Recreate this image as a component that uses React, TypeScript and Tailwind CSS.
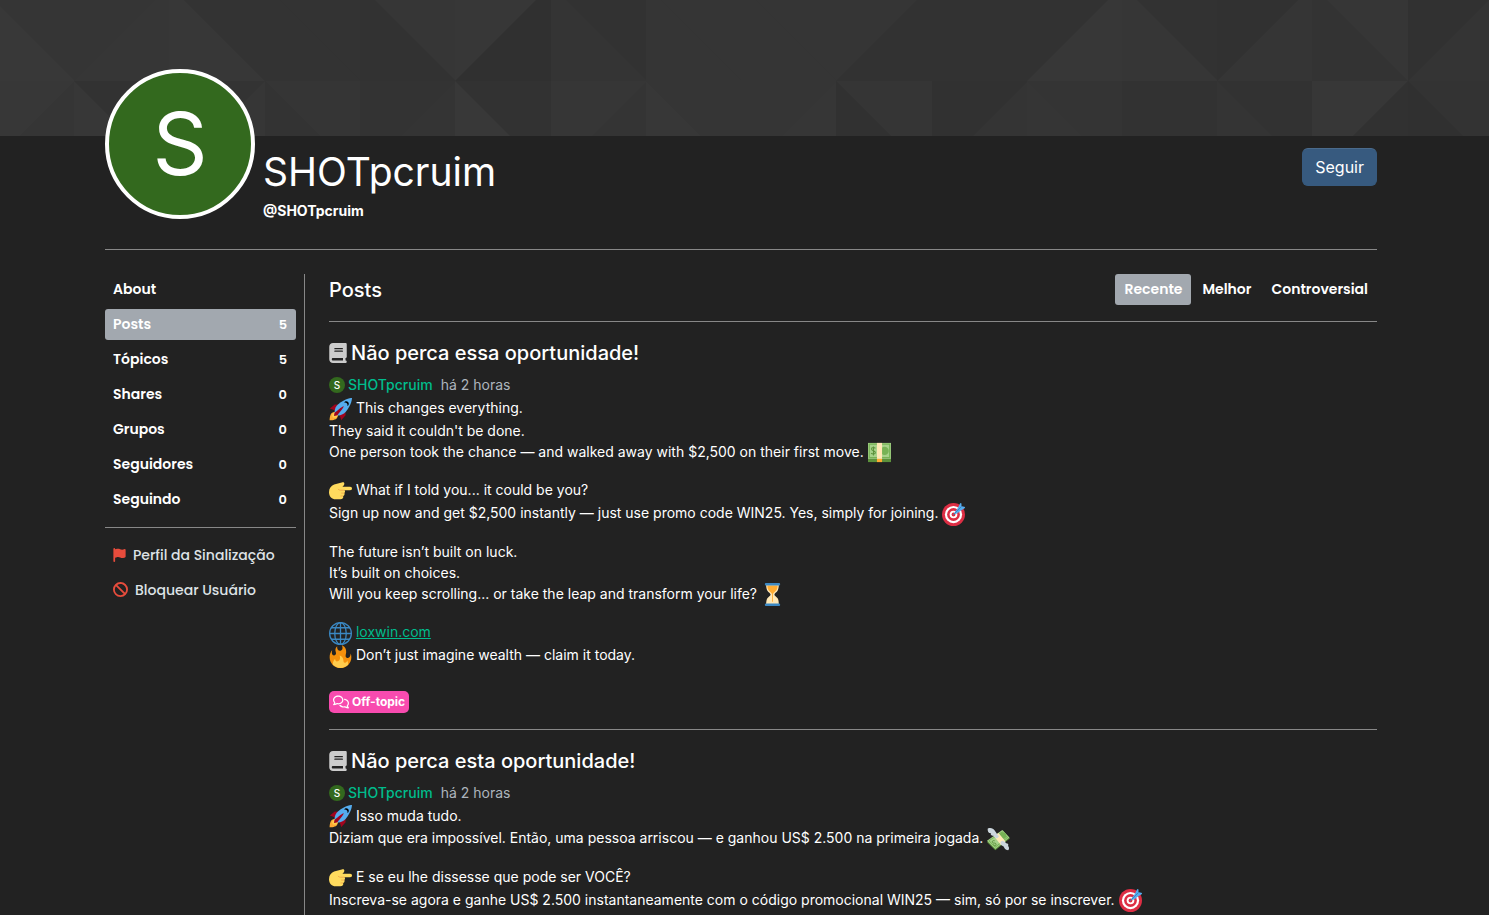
import { useState } from 'react';
import type { ReactNode } from 'react';
import { FaBan, FaBook, FaFlag, FaRegComments } from 'react-icons/fa6';

type Slope = '/' | '\\';

// [x, slope, left colour, right colour]
const topRow: [number, Slope, string, string][] = [
  [-21, '\\', '#383838', '#353535'],
  [74, '/', '#353535', '#363636'],
  [169, '\\', '#373737', '#333333'],
  [265, '\\', '#333333', '#333333'],
  [360, '\\', '#323232', '#363636'],
  [455, '/', '#373737', '#303030'],
  [551, '\\', '#343434', '#323232'],
  [646, '\\', '#353535', '#353535'],
  [741, '\\', '#353535', '#353535'],
  [836, '/', '#353535', '#323232'],
  [932, '/', '#323232', '#323232'],
  [1027, '/', '#323232', '#373737'],
  [1122, '\\', '#363636', '#323232'],
  [1217, '/', '#313131', '#353535'],
  [1312, '\\', '#333333', '#363636'],
  [1408, '/', '#313131', '#343434'],
];

const bottomRow: [number, Slope, string, string][] = [
  [-21, '/', '#373737', '#353535'],
  [74, '\\', '#373737', '#323232'],
  [169, '/', '#333333', '#363636'],
  [265, '\\', '#333333', '#353535'],
  [360, '/', '#333333', '#343434'],
  [455, '\\', '#383838', '#323232'],
  [551, '/', '#363636', '#343434'],
  [646, '\\', '#373737', '#353535'],
  [741, '/', '#353535', '#363636'],
  [836, '\\', '#313131', '#353535'],
  [932, '/', '#313131', '#343434'],
  [1027, '\\', '#353535', '#343434'],
  [1122, '/', '#323232', '#323232'],
  [1217, '\\', '#343434', '#323232'],
  [1312, '/', '#373737', '#313131'],
  [1408, '\\', '#303030', '#333333'],
];

function Tile({ x, y, slope, left, right }: { x: number; y: number; slope: Slope; left: string; right: string }) {
  const s = 96;
  const half = slope === '/' ? `M${x} ${y}v${s}l${s} ${-s}z` : `M${x} ${y}v${s}h${s}z`;
  return (
    <>
      <rect x={x} y={y} width={s} height={s} fill={right} />
      <path d={half} fill={left} />
    </>
  );
}

function Cover() {
  return (
    <div className="h-[136px] overflow-hidden bg-[#343434]">
      <svg className="block h-full w-full" viewBox="0 0 1489 136" preserveAspectRatio="xMinYMin slice" aria-hidden="true">
        {topRow.map(([x, slope, left, right]) => (
          <Tile key={x} x={x} y={-15} slope={slope} left={left} right={right} />
        ))}
        {bottomRow.map(([x, slope, left, right]) => (
          <Tile key={x} x={x} y={81} slope={slope} left={left} right={right} />
        ))}
      </svg>
    </div>
  );
}

function Emoji({ label, children }: { label: string; children: ReactNode }) {
  return (
    <svg className="-my-px inline-block size-[23px] align-middle" viewBox="0 0 36 36" role="img" aria-label={label}>
      {children}
    </svg>
  );
}

const Rocket = () => (
  <Emoji label="rocket">
    <path fill="#A0041E" d="M1 17l8-7 16 1 1 16-7 8s.001-5.999-6-12-12-6-12-6z" />
    <path fill="#FFAC33" d="M.973 35s-.036-7.979 2.985-11S15 21.187 15 21.187 14.999 29 11.999 32c-3 3-11.026 3-11.026 3z" />
    <circle fill="#FFCC4D" cx="9" cy="27" r="4" />
    <path fill="#55ACEE" d="M35.999 0s-10 0-22 10c-6 5-6 14-4 16s11 2 16-4c10-12 10-22 10-22z" />
    <path d="M26.999 5c-1.623 0-3.013.971-3.641 2.36.502-.227 1.055-.36 1.641-.36 2.209 0 4 1.791 4 4 0 .586-.133 1.139-.359 1.64 1.389-.627 2.359-2.017 2.359-3.64 0-2.209-1.791-4-4-4z" />
    <path fill="#A0041E" d="M8 28s0-4 1-5 13.001-10.999 14-10-9.001 13-10.001 14S8 28 8 28z" />
  </Emoji>
);

const Banknote = () => (
  <Emoji label="dollar banknote">
    <path fill="#5C913B" d="M0 28h36v5H0z" />
    <path fill="#A7D28B" d="M0 3h36v25H0z" />
    <path fill="#77B255" d="M1 4v23h34V4H1zm32 21H3V6h30v19z" />
    <circle cx="26" cy="15.500" r="6.500" fill="#77B255" />
    <path d="M11.500 11.500C10 9.800 5.500 9.700 5.500 12.500c0 3.200 6 2.300 6 5.500 0 3-5 3-6.500 1M8.500 8.500v14" fill="none" stroke="#5C913B" strokeWidth="1.600" />
    <path fill="#FFE8B6" d="M14 3h8v25h-8z" />
    <path fill="#FFAC33" d="M14 28h8v5h-8z" />
  </Emoji>
);

const MoneyWings = () => (
  <Emoji label="money with wings">
    <path fill="#5C913B" d="M0 22L25 4l11 12-23 19z" />
    <path fill="#A7D28B" d="M0 20L24 3l11 12-22 18z" />
    <path fill="#77B255" d="M2 20L24 5l9 10-20 16zM4 20l9 9 18-14-7-8z" />
    <circle cx="25" cy="12" r="5" fill="#77B255" />
    <path d="M12 20c-3-1-5 1-3 3s4-1 5 2-2 3-4 1" fill="none" stroke="#5C913B" strokeWidth="1.500" />
    <path fill="#FFE8B6" d="M11 13l7-5 11 13-7 6z" />
    <path fill="#CCD6DD" d="M1 1c5-2 9 0 11 3 3 4 4 7 7 9l-3 3c-3 0-5-3-6-4-3 1-5-2-4-4C2 8 1 5 1 1z" />
    <path fill="#CCD6DD" d="M21 22l3-2c3 1 5 2 6 4 3 0 4 2 3 4 2 2 2 5 0 7-5-1-6-4-7-6-3-1-5-3-5-7z" />
  </Emoji>
);

const PointRight = () => (
  <Emoji label="pointing right">
    <path
      fill="#FFDB5E"
      d="M33 10.500H21c2-1.500 3-3 3-5C24 3.500 22 3.300 20 4L8 7c-5 2-8 6-8 12 0 7 5 11 10 11h8c4 0 5-3 4-5 2-1 3-3 2-4.500 1.500-1.300 1.300-3.300.300-4.500H33c4 0 4-5.500 0-5.500z"
    />
    <path d="M24.300 16H18c-2 0-3-.700-4-2M24 20.500h-5M22 25h-4" fill="none" stroke="#EE9547" strokeWidth="1" />
  </Emoji>
);

const Target = () => (
  <Emoji label="bullseye">
    <circle cx="18" cy="18" r="18" fill="#DD2E44" />
    <circle cx="18" cy="18" r="13.500" fill="#FFF" />
    <circle cx="18" cy="18" r="10" fill="#DD2E44" />
    <circle cx="18" cy="18" r="6" fill="#FFF" />
    <circle cx="18" cy="18" r="3" fill="#DD2E44" />
    <path fill="#55ACEE" d="M19 17c0-2 3-6 5-8l4-8c1-1.500 2.500-1 2.500.500V5l4.500 1c1.500.300 1.500 1.500.300 2.300L28 13c-2 2-6 5-9 4z" />
    <path d="M17.500 18.500L31 5" stroke="#3A87C2" strokeWidth="1.500" />
  </Emoji>
);

const Hourglass = () => (
  <Emoji label="hourglass">
    <path
      fill="#FFE8B6"
      d="M21 18c0-2.001 3.246-3.369 5-6 2-3 2-10 2-10H8s0 7 2 10c1.754 2.631 5 3.999 5 6s-3.246 3.369-5 6c-2 3-2 10-2 10h20s0-7-2-10c-1.754-2.631-5-3.999-5-6z"
    />
    <path fill="#FFAC33" d="M10 4h16c0 3-.500 5.500-2 7.500-1.800 2.500-4.300 3.800-5.300 6v12h-1.400v-12c-1-2.200-3.500-3.500-5.300-6-1.500-2-2-4.500-2-7.500z" />
    <path
      fill="#3B88C3"
      d="M30 34c0 1.104-.896 2-2 2H8c-1.104 0-2-.896-2-2s.896-2 2-2h20c1.104 0 2 .896 2 2zm0-32c0 1.104-.896 2-2 2H8c-1.104 0-2-.896-2-2s.896-2 2-2h20c1.104 0 2 .896 2 2z"
    />
  </Emoji>
);

const Globe = () => (
  <Emoji label="globe">
    <g fill="none" stroke="#3B88C3" strokeWidth="2">
      <circle cx="18" cy="18" r="17" />
      <ellipse cx="18" cy="18" rx="9" ry="17" />
      <path d="M18 1v34M1 18h34M4 9h28M4 27h28" />
    </g>
  </Emoji>
);

const Fire = () => (
  <Emoji label="fire">
    <path
      fill="#F4900C"
      d="M35 19c0-2.062-.367-4.039-1.04-5.868-.46 5.389-3.333 8.157-6.335 6.868-2.812-1.208-.917-5.917-.777-8.164.236-3.809-.012-8.169-6.931-11.794 2.875 5.500.333 8.917-2.333 9.125-2.958.231-5.667-2.542-4.667-7.042-3.238 2.386-3.332 6.402-2.333 9 1.042 2.708-.042 4.958-2.583 5.208-2.840.280-4.418-3.041-2.963-8.333C2.520 10.965 1 14.805 1 19c0 9.389 7.611 17 17 17s17-7.611 17-17z"
    />
    <path
      fill="#FFCC4D"
      d="M28.394 23.999c.148 3.084-2.561 4.293-4.019 3.709-2.106-.843-1.541-2.291-2.083-5.291s-2.625-5.083-5.708-6c2.250 6.333-1.247 8.667-3.080 9.084-1.872.426-3.753-.001-3.968-4.007C7.352 23.668 6 26.676 6 30c0 .368.023.730.055 1.090C9.125 34.124 13.342 36 18 36s8.875-1.876 11.945-4.910c.032-.360.055-.722.055-1.090 0-2.187-.584-4.236-1.606-6.001z"
    />
  </Emoji>
);

const navItems: { label: string; count?: number }[] = [
  { label: 'About' },
  { label: 'Posts', count: 5 },
  { label: 'Tópicos', count: 5 },
  { label: 'Shares', count: 0 },
  { label: 'Grupos', count: 0 },
  { label: 'Seguidores', count: 0 },
  { label: 'Seguindo', count: 0 },
];

function Sidebar() {
  return (
    <aside className="w-[200px] shrink-0 border-r border-[#888] pr-2 font-['Poppins','Inter',sans-serif] text-sm">
      <nav className="flex flex-col gap-1 font-semibold">
        {navItems.map((item) => (
          <a
            key={item.label}
            href="#"
            className={`flex h-[31px] items-baseline justify-between rounded-[3px] px-2 pt-[5px] ${
              item.label === 'Posts' ? 'bg-[#a2a8af]' : 'hover:bg-[#303030]'
            }`}
          >
            {item.label}
            {item.count !== undefined && <span className="pr-px text-[13px]">{item.count}</span>}
          </a>
        ))}
      </nav>
      <hr className="my-3 border-[#888]" />
      <div className="flex flex-col gap-1 font-medium text-[#dee2e6]">
        <button type="button" className="flex h-[31px] items-center gap-[7px] px-2 pb-0.5">
          <FaFlag className="h-[14px] w-[13px] text-[#e74c3c]" />
          Perfil da Sinalização
        </button>
        <button type="button" className="flex h-[31px] items-center gap-[7px] px-2 pb-0.5">
          <FaBan className="size-[15px] text-[#e74c3c]" />
          Bloquear Usuário
        </button>
      </div>
    </aside>
  );
}

function Post({ title, children }: { title: string; children: ReactNode }) {
  return (
    <article className="border-b border-[#888] pt-4 pb-4">
      <h2 className="flex items-center gap-1 text-xl leading-[30px] font-medium">
        <FaBook className="h-5 w-[18px] text-[#ccc]" />
        <a href="#">{title}</a>
      </h2>
      <div className="mt-2 flex h-[18px] items-center text-sm">
        <span className="flex size-4 items-center justify-center rounded-full bg-[#33691e] text-[10px] font-medium">S</span>
        <a href="#" className="ml-[3px] font-medium text-[#00bc8c]">
          SHOTpcruim
        </a>
        <span className="ml-2 text-[#adb5bd]">há 2 horas</span>
      </div>
      <div className="mt-[3px] flex flex-col gap-4 text-sm leading-[21px]">{children}</div>
      <a
        href="#"
        className="mt-6 flex h-[22px] w-fit items-center gap-[3px] rounded-[5px] bg-[#f84baf] px-1 text-xs font-bold"
      >
        <FaRegComments className="size-4" />
        Off-topic
      </a>
    </article>
  );
}

export default function App() {
  const [sort, setSort] = useState('Recente');

  return (
    <div className="h-screen overflow-hidden bg-[#222] font-['Inter',sans-serif] text-white">
      <Cover />
      <div className="pr-[7px]">
        <div className="mx-auto max-w-[1320px] px-6">
          {/* Profile header */}
          <header className="flex h-[114px] items-start border-b border-[#888]">
            <div className="relative -mt-[67px] flex size-[150px] shrink-0 items-center justify-center rounded-full border-4 border-white bg-[#33691e] text-[86px] leading-none">
              S
            </div>
            <div className="ml-2 pt-3">
              <h1 className="text-[39px] leading-[48px]">SHOTpcruim</h1>
              <p className="mt-1 text-sm leading-[21px] font-bold">@SHOTpcruim</p>
            </div>
            <button
              type="button"
              className="mt-3 ml-auto h-[38px] rounded-md border border-[#375a7f] border-t-[#4b6b8c] bg-[#375a7f] px-3 text-base hover:bg-[#2f4d6c]"
            >
              Seguir
            </button>
          </header>

          <div className="mt-6 flex">
            <Sidebar />
            <main className="min-w-0 flex-1 pl-6">
              <div className="flex items-center justify-between border-b border-[#888] pb-4">
                <h2 className="text-xl font-medium">Posts</h2>
                <div className="flex gap-0.5 font-['Poppins','Inter',sans-serif] text-sm font-semibold">
                  {['Recente', 'Melhor', 'Controversial'].map((name) => (
                    <button
                      key={name}
                      type="button"
                      onClick={() => setSort(name)}
                      className={`h-[31px] rounded-[3px] px-[9px] pb-0.5 ${sort === name ? 'bg-[#a2a8af]' : ''}`}
                    >
                      {name}
                    </button>
                  ))}
                </div>
              </div>

              <Post title="Não perca essa oportunidade!">
                <p>
                  <Rocket /> This changes everything.
                  <br />
                  They said it couldn't be done.
                  <br />
                  One person took the chance — and walked away with $2,500 on their first move. <Banknote />
                </p>
                <p>
                  <PointRight /> What if I told you... it could be you?
                  <br />
                  Sign up now and get $2,500 instantly — just use promo code WIN25. Yes, simply for joining. <Target />
                </p>
                <p>
                  The future isn’t built on luck.
                  <br />
                  It’s built on choices.
                  <br />
                  Will you keep scrolling... or take the leap and transform your life? <Hourglass />
                </p>
                <p>
                  <Globe />{' '}
                  <a href="#" className="text-[#00bc8c] underline">
                    loxwin.com
                  </a>
                  <br />
                  <Fire /> Don’t just imagine wealth — claim it today.
                </p>
              </Post>

              <Post title="Não perca esta oportunidade!">
                <p>
                  <Rocket /> Isso muda tudo.
                  <br />
                  Diziam que era impossível. Então, uma pessoa arriscou — e ganhou US$ 2.500 na primeira jogada. <MoneyWings />
                </p>
                <p>
                  <PointRight /> E se eu lhe dissesse que pode ser VOCÊ?
                  <br />
                  Inscreva-se agora e ganhe US$ 2.500 instantaneamente com o código promocional WIN25 — sim, só por se inscrever.{' '}
                  <Target />
                </p>
              </Post>
            </main>
          </div>
        </div>
      </div>
    </div>
  );
}
